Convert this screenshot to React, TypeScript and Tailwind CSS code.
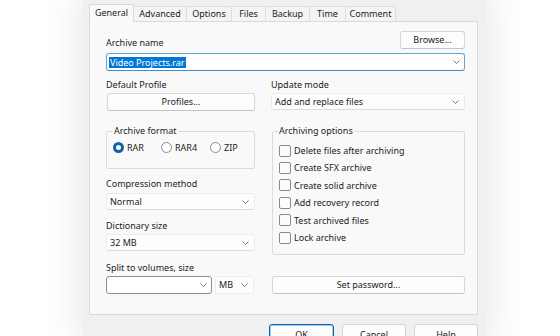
import React from 'react';
import clsx from 'clsx';

const TABS = [
  { name: 'General', w: 'w-[45px]' },
  { name: 'Advanced', w: 'w-[53px]' },
  { name: 'Options', w: 'w-[45px]' },
  { name: 'Files', w: 'w-[34px]' },
  { name: 'Backup', w: 'w-[44px]' },
  { name: 'Time', w: 'w-[36px]' },
  { name: 'Comment', w: 'w-[50px]' },
];

const OPTIONS = [
  'Delete files after archiving',
  'Create SFX archive',
  'Create solid archive',
  'Add recovery record',
  'Test archived files',
  'Lock archive',
];

const Chevron = () => (
  <svg width="7" height="4" viewBox="0 0 7 4" className="shrink-0">
    <path d="M0.5 0.5 L3.5 3.5 L6.5 0.5" stroke="#7a7a7a" strokeWidth="1" fill="none" />
  </svg>
);

const Combo = ({ children, className }: { children?: React.ReactNode; className?: string }) => (
  <div
    className={clsx(
      'flex items-center justify-between rounded-[3px] bg-[#fdfdfd] pl-[3px]',
      className
    )}
  >
    <span className="truncate">{children}</span>
    <Chevron />
  </div>
);

const Button = ({ children, className }: { children: React.ReactNode; className?: string }) => (
  <div
    className={clsx(
      'flex shrink-0 items-center justify-center rounded-[3px] border border-[#d6d6d6] border-b-[#c4c4c4] bg-[#fdfdfd]',
      className
    )}
  >
    {children}
  </div>
);

const Radio = ({ label, checked, className }: { label: string; checked?: boolean; className?: string }) => (
  <div className={clsx('flex items-center gap-[3px]', className)}>
    <span
      className={clsx(
        'h-[11px] w-[11px] rounded-full bg-white',
        checked ? 'border-[3px] border-[#0f62b0]' : 'border border-[#8c8c8c]'
      )}
    />
    <span>{label}</span>
  </div>
);

const Check = ({ label }: { label: string }) => (
  <div className="flex h-[17.4px] items-center gap-[3px]">
    <span className="h-[12px] w-[12px] rounded-[2px] border border-[#8a8a8a] bg-[#fbfbfb]" />
    <span>{label}</span>
  </div>
);

const Label = ({ children, className }: { children: React.ReactNode; className?: string }) => (
  <div className={clsx('h-[14px] shrink-0 leading-[14px]', className)}>{children}</div>
);

export default function App() {
  return (
    <div className="flex h-[336px] w-[560px] overflow-hidden bg-white font-['Noto_Sans','Open_Sans',sans-serif] text-[9px] text-[#1c1c1c]">
      <div className="ml-[83px] flex h-full w-[403px] shrink-0 flex-col bg-[#f0f0f0] pl-[6px] pr-[8px] pt-[4px] shadow-[0_0_36px_6px_rgba(0,0,0,0.09)]">
        {/* tab strip */}
        <div className="flex h-[17px] shrink-0 items-end">
          {TABS.map((t, i) =>
            i === 0 ? (
              <div
                key={t.name}
                className={clsx(
                  'relative z-10 -mb-px flex h-[18px] items-center justify-center border border-b-0 border-[#d9d9d9] bg-[#f9f9f9] pb-[1px]',
                  t.w
                )}
              >
                {t.name}
              </div>
            ) : (
              <div
                key={t.name}
                className={clsx(
                  'flex h-[15px] items-center justify-center border border-l-0 border-b-0 border-[#dedede] bg-[#f4f4f4]',
                  t.w
                )}
              >
                {t.name}
              </div>
            )
          )}
        </div>

        {/* page */}
        <div className="flex h-[294px] shrink-0 flex-col border border-[#dadada] bg-[#f9f9f9] pl-[16px] pr-[12px] pt-[9px]">
          <div className="flex h-[18px] items-end justify-between">
            <Label className="-mb-[1px]">Archive name</Label>
            <Button className="h-[18px] w-[65px]">Browse...</Button>
          </div>
          <div className="mt-[4px] flex h-[18px] items-center justify-between rounded-[3px] border border-[#66a6d6] border-b-[#3f8ccb] bg-white pl-[2px] pr-[4px]">
            <span className="bg-[#0078d7] px-[1px] leading-[11px] text-white">Video Projects.rar</span>
            <Chevron />
          </div>

          <div className="mt-[7px] flex gap-[16px]">
            {/* left column */}
            <div className="flex w-[149px] flex-col">
              <Label>Default Profile</Label>
              <Button className="mt-[1px] h-[18px] w-[148px] self-end">Profiles...</Button>

              <fieldset className="mt-[13px] h-[45px] shrink-0 rounded-[2px] border border-[#dcdcdc]">
                <legend className="ml-[5px] px-[2px] leading-[14px]">Archive format</legend>
                <div className="flex h-[14px] items-center pl-[6px] pt-[5px]">
                  <Radio label="RAR" checked className="w-[48px]" />
                  <Radio label="RAR4" className="w-[49px]" />
                  <Radio label="ZIP" />
                </div>
              </fieldset>

              <Label className="mt-[8px]">Compression method</Label>
              <Combo className="mt-[2px] h-[17px] border border-[#ececec] border-b-[#dcdcdc] pr-[5px]">Normal</Combo>

              <Label className="mt-[9px]">Dictionary size</Label>
              <Combo className="mt-[1px] h-[17px] border border-[#ececec] border-b-[#dcdcdc] pr-[5px]">32 MB</Combo>

              <Label className="mt-[10px]">Split to volumes, size</Label>
              <div className="mt-[1px] flex gap-[3px]">
                <Combo className="h-[18px] w-[106px] border border-[#8f8f8f] bg-white pr-[4px]" />
                <Combo className="h-[18px] w-[39px] border border-[#ececec] pr-[5px]">MB</Combo>
              </div>
            </div>

            {/* right column */}
            <div className="flex w-[194px] flex-col">
              <Label>Update mode</Label>
              <Combo className="mt-[1px] h-[17px] border border-[#ececec] border-b-[#dcdcdc] pr-[5px]">
                Add and replace files
              </Combo>

              <fieldset className="ml-[1px] mt-[14px] h-[131px] shrink-0 rounded-[2px] border border-[#dcdcdc] pl-[6px] pt-[4px]">
                <legend className="ml-[-1px] px-[1px] leading-[14px]">Archiving options</legend>
                {OPTIONS.map((o) => (
                  <Check key={o} label={o} />
                ))}
              </fieldset>

              <Button className="ml-[1px] mt-auto h-[18px] w-[193px]">Set password...</Button>
            </div>
          </div>
        </div>

        {/* dialog buttons */}
        <div className="mt-[9px] flex shrink-0 justify-end gap-[8px]">
          <div className="flex h-[22px] w-[65px] items-center justify-center rounded-[3px] border border-[#0067c0] bg-[#fdfdfd] shadow-[inset_0_0_0_1px_#a9cbe9]">
            OK
          </div>
          <Button className="h-[22px] w-[64px]">Cancel</Button>
          <Button className="h-[22px] w-[64px]">Help</Button>
        </div>
      </div>
    </div>
  );
}
